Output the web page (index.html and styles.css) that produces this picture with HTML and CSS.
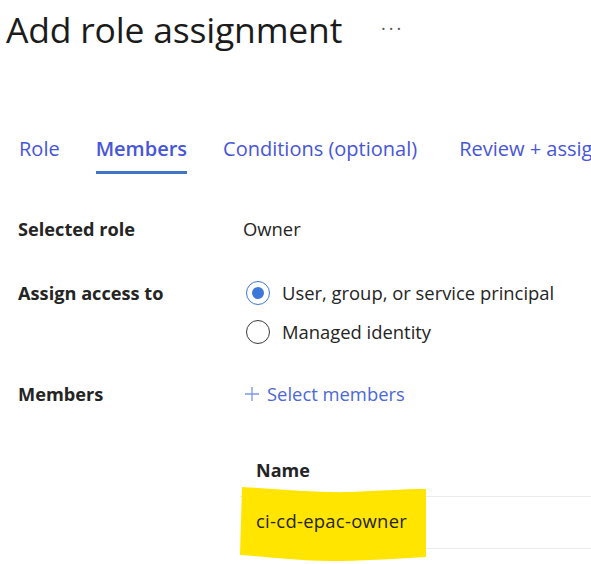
FILE: index.html
```html
<!DOCTYPE html>
<html>
<head>
<meta charset="utf-8">
<link rel="stylesheet" href="styles.css">
</head>
<body>
<div class="page">
  <header class="header">
    <h1 class="title">Add role assignment</h1>
    <span class="more">···</span>
  </header>

  <nav class="tabs">
    <a class="tab">Role</a>
    <a class="tab active">Members</a>
    <a class="tab">Conditions (optional)</a>
    <a class="tab tab-last">Review + assign</a>
  </nav>

  <div class="form">
    <div class="row row-role">
      <div class="label">Selected role</div>
      <div class="value">Owner</div>
    </div>
    <div class="row row-access">
      <div class="label">Assign access to</div>
      <div class="options">
        <label class="option"><span class="radio checked"></span>User, group, or service principal</label>
        <label class="option"><span class="radio"></span>Managed identity</label>
      </div>
    </div>
    <div class="row row-members">
      <div class="label">Members</div>
      <div class="value link">
        <svg class="plus" width="16" height="16" viewBox="0 0 16 16"><path d="M8 1v14M1 8h14" stroke="#7b97e3" stroke-width="1.3" fill="none"/></svg>
        <span>Select members</span>
      </div>
    </div>
  </div>

  <div class="table">
    <div class="th">Name</div>
    <div class="tr">
      <svg class="highlight" width="190" height="76" viewBox="0 0 190 76" preserveAspectRatio="none">
        <path d="M2 0 C40 2 80 6 110 5 C140 4 160 2 186 2 L186 70 C150 72 120 74 90 74 C60 74 30 70 0 68 Z" fill="#ffe500"/>
      </svg>
      <span class="td">ci-cd-epac-owner</span>
    </div>
  </div>
</div>
</body>
</html>
```

FILE: styles.css
```css
html, body {
  margin: 0;
  padding: 0;
  background: #ffffff;
}
body {
  font-family: "Open Sans", "Noto Sans", "Liberation Sans", sans-serif;
  color: #242424;
  width: 591px;
  height: 564px;
  overflow: hidden;
}
.page {
  position: relative;
}
.header {
  display: flex;
  align-items: center;
  padding-left: 6px;
  height: 58px;
}
.title {
  margin: 0;
  font-size: 35.5px;
  font-weight: 400;
  letter-spacing: -0.2px;
  color: #1b1b1b;
  line-height: 58px;
}
.more {
  margin-left: 39px;
  font-size: 18px;
  letter-spacing: 3px;
  color: #555;
  line-height: 20px;
  padding-bottom: 2px;
}
.tabs {
  display: flex;
  padding-left: 19px;
  margin-top: 78px;
  gap: 36px;
  white-space: nowrap;
}
.tab {
  font-size: 20px;
  color: #4755d8;
  line-height: 26px;
  padding-bottom: 9px;
  border-bottom: 3px solid transparent;
}
.tab-last {
  margin-left: 6px;
}
.tab.active {
  font-weight: 600;
  border-bottom-color: #3f74c9;
}
.form {
  padding-left: 18px;
  margin-top: 42px;
}
.row {
  display: grid;
  grid-template-columns: 225px 1fr;
  align-items: start;
}
.label {
  font-size: 18.2px;
  font-weight: 700;
  color: #242424;
  line-height: 26px;
}
.value {
  font-size: 18.4px;
  line-height: 26px;
  color: #242424;
}
.row-access {
  margin-top: 38px;
}
.options {
  display: flex;
  flex-direction: column;
  gap: 13px;
}
.option {
  display: flex;
  align-items: center;
  gap: 12px;
  font-size: 18.4px;
  line-height: 26px;
  color: #242424;
  margin-left: 3px;
}
.radio {
  width: 24px;
  height: 24px;
  box-sizing: border-box;
  border: 1.5px solid #3a3a3a;
  border-radius: 50%;
  display: inline-flex;
  align-items: center;
  justify-content: center;
}
.radio.checked {
  border-color: #3c78d8;
}
.radio.checked::after {
  content: "";
  width: 12px;
  height: 12px;
  border-radius: 50%;
  background: #3c78d8;
}
.row-members {
  margin-top: 36px;
}
.link {
  display: flex;
  align-items: center;
  gap: 7px;
  color: #4b68d6;
  margin-left: 1px;
}
.plus {
  display: block;
}
.table {
  margin-left: 240px;
  margin-top: 50px;
}
.th {
  font-size: 18px;
  font-weight: 700;
  line-height: 26px;
  padding-left: 16px;
  padding-bottom: 13px;
  border-bottom: 1px solid #ebebeb;
}
.tr {
  position: relative;
  height: 51px;
  border-bottom: 1px solid #ebebeb;
  display: flex;
  align-items: center;
}
.highlight {
  position: absolute;
  left: 0;
  top: -10px;
}
.td {
  position: relative;
  padding-left: 16px;
  font-size: 18.4px;
  letter-spacing: 0.3px;
  line-height: 26px;
  color: #242424;
  margin-top: -4px;
}
```
